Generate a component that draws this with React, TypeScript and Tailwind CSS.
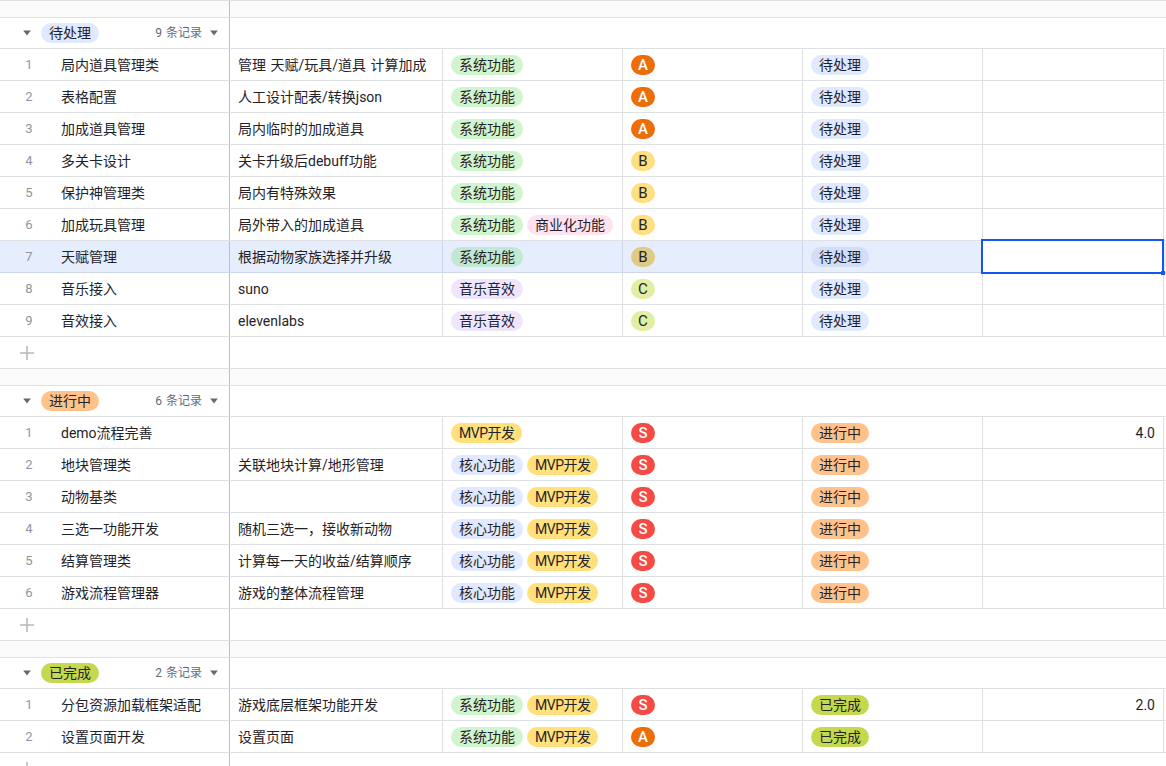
const LINE = "border-[#dee0e3]";

type Tone = { base: string; hi: string };
const tones: Record<string, Tone> = {
  系统功能: { base: "bg-[#d0f5ce]", hi: "bg-[#c0e8d3]" },
  商业化功能: { base: "bg-[#ffe2f0]", hi: "bg-[#ffe2f0]" },
  音乐音效: { base: "bg-[#efe6fd]", hi: "bg-[#efe6fd]" },
  核心功能: { base: "bg-[#e0e9ff]", hi: "bg-[#e0e9ff]" },
  MVP开发: { base: "bg-[#ffe07a]", hi: "bg-[#ffe07a]" },
  待处理: { base: "bg-[#e0e9ff]", hi: "bg-[#d2ddf7]" },
  进行中: { base: "bg-[#ffc28a]", hi: "bg-[#ffc28a]" },
  已完成: { base: "bg-[#c5d94f]", hi: "bg-[#c5d94f]" },
};

const levels: Record<string, Tone & { text: string }> = {
  S: { base: "bg-[#f54a45]", hi: "bg-[#f54a45]", text: "text-white font-medium" },
  A: { base: "bg-[#ed6d0c]", hi: "bg-[#ed6d0c]", text: "text-white font-medium" },
  B: { base: "bg-[#ffdf7f]", hi: "bg-[#e0cb84]", text: "text-[#1f2329]" },
  C: { base: "bg-[#e1efa3]", hi: "bg-[#e1efa3]", text: "text-[#1f2329]" },
};

type Row = { name: string; desc: string; tags: string[]; level: string; value?: string; selected?: boolean };
type Group = { status: string; rows: Row[] };

const sys = ["系统功能"];
const mus = ["音乐音效"];
const core = ["核心功能", "MVP开发"];
const sysMvp = ["系统功能", "MVP开发"];

const groups: Group[] = [
  {
    status: "待处理",
    rows: [
      { name: "局内道具管理类", desc: "管理 天赋/玩具/道具 计算加成", tags: sys, level: "A" },
      { name: "表格配置", desc: "人工设计配表/转换json", tags: sys, level: "A" },
      { name: "加成道具管理", desc: "局内临时的加成道具", tags: sys, level: "A" },
      { name: "多关卡设计", desc: "关卡升级后debuff功能", tags: sys, level: "B" },
      { name: "保护神管理类", desc: "局内有特殊效果", tags: sys, level: "B" },
      { name: "加成玩具管理", desc: "局外带入的加成道具", tags: ["系统功能", "商业化功能"], level: "B" },
      { name: "天赋管理", desc: "根据动物家族选择并升级", tags: sys, level: "B", selected: true },
      { name: "音乐接入", desc: "suno", tags: mus, level: "C" },
      { name: "音效接入", desc: "elevenlabs", tags: mus, level: "C" },
    ],
  },
  {
    status: "进行中",
    rows: [
      { name: "demo流程完善", desc: "", tags: ["MVP开发"], level: "S", value: "4.0" },
      { name: "地块管理类", desc: "关联地块计算/地形管理", tags: core, level: "S" },
      { name: "动物基类", desc: "", tags: core, level: "S" },
      { name: "三选一功能开发", desc: "随机三选一，接收新动物", tags: core, level: "S" },
      { name: "结算管理类", desc: "计算每一天的收益/结算顺序", tags: core, level: "S" },
      { name: "游戏流程管理器", desc: "游戏的整体流程管理", tags: core, level: "S" },
    ],
  },
  {
    status: "已完成",
    rows: [
      { name: "分包资源加载框架适配", desc: "游戏底层框架功能开发", tags: sysMvp, level: "S", value: "2.0" },
      { name: "设置页面开发", desc: "设置页面", tags: sysMvp, level: "A" },
    ],
  },
];

function Pill({ label, hi }: { label: string; hi?: boolean }) {
  const tone = tones[label];
  return (
    <span
      className={`flex h-5 shrink-0 items-center rounded-full px-2 text-[14px] leading-5 text-[#1f2329] ${
        label === "MVP开发" ? "tracking-[-0.5px]" : ""
      } ${hi ? tone.hi : tone.base}`}
    >
      {label}
    </span>
  );
}

function Caret({ className }: { className: string }) {
  return (
    <svg viewBox="0 0 8 6" className={`h-[6px] w-2 shrink-0 fill-[#646a73] ${className}`}>
      <path d="M0.2 0.6h7.6L4 5.4z" />
    </svg>
  );
}

function Spacer() {
  return (
    <div className={`flex h-[17px] border-b bg-[#fbfbfb] ${LINE}`}>
      <div className="w-[230px] shrink-0 border-r border-[#bbbfc4]" />
    </div>
  );
}

function GroupHeader({ status, count }: { status: string; count: number }) {
  return (
    <div className={`flex h-[31px] border-b ${LINE}`}>
      <div className="flex w-[230px] shrink-0 items-center border-r border-[#bbbfc4] pl-[23px]">
        <Caret className="mr-[10px]" />
        <Pill label={status} />
        <span className="ml-auto text-[12px] text-[#646a73] [word-spacing:1px]">{count} 条记录</span>
        <Caret className="ml-2 mr-[11px]" />
      </div>
    </div>
  );
}

function AddRow() {
  return (
    <div className={`flex h-8 border-b ${LINE}`}>
      <div className="flex w-[230px] shrink-0 items-center border-r border-[#bbbfc4] pl-[20px]">
        <svg viewBox="0 0 14 14" className="mt-px h-[14px] w-[14px] stroke-[#b4b8be]" fill="none" strokeWidth="1.5">
          <path d="M7 0v14M0 7h14" />
        </svg>
      </div>
    </div>
  );
}

function DataRow({ row, status, index }: { row: Row; status: string; index: number }) {
  const hi = !!row.selected;
  const line = hi ? "border-[#cdd6ea]" : LINE;
  const level = levels[row.level];
  return (
    <div className={`relative flex h-8 border-b ${line} ${hi ? "bg-[#e6edfc]" : ""}`}>
      <div className="flex w-[230px] shrink-0 items-center border-r border-[#bbbfc4]">
        <span className="w-[58px] text-center text-[13px] text-[#8f959e]">{index + 1}</span>
        <span className="ml-[3px] pt-px text-[14px] text-[#1f2329]">{row.name}</span>
      </div>
      <div className={`flex w-[213px] shrink-0 items-center border-r pl-2 pt-px text-[14px] text-[#1f2329] [word-spacing:1px] ${line}`}>
        {row.desc}
      </div>
      <div className={`flex w-[180px] shrink-0 items-center gap-1 border-r pl-2 ${line}`}>
        {row.tags.map((t) => (
          <Pill key={t} label={t} hi={hi} />
        ))}
      </div>
      <div className={`flex w-[180px] shrink-0 items-center border-r pl-2 ${line}`}>
        <span className={`flex h-5 w-6 items-center justify-center rounded-full pt-px text-[15px] ${level.text} ${hi ? level.hi : level.base}`}>
          {row.level}
        </span>
      </div>
      <div className={`flex w-[180px] shrink-0 items-center border-r pl-2 ${line}`}>
        <Pill label={status} hi={hi} />
      </div>
      <div className={`flex w-[181px] shrink-0 items-center justify-end border-r pr-2 pt-px text-[14px] text-[#1f2329] ${LINE}`}>
        {row.value}
      </div>
      {hi && (
        <div className="absolute left-[981px] top-[-2px] z-10 h-[35px] w-[183px] border-2 border-[#1456f0] bg-white">
          <span className="absolute -bottom-[3px] -right-[3px] h-1 w-1 bg-[#1456f0]" />
        </div>
      )}
    </div>
  );
}

export default function App() {
  return (
    <div
      className="h-[766px] w-[1166px] overflow-hidden bg-white"
      style={{ fontFamily: 'Roboto, "Noto Sans CJK SC", sans-serif' }}
    >
      <div className={`border-t ${LINE}`} />
      {groups.map((g) => (
        <div key={g.status}>
          <Spacer />
          <GroupHeader status={g.status} count={g.rows.length} />
          {g.rows.map((r, idx) => (
            <DataRow key={r.name} row={r} status={g.status} index={idx} />
          ))}
          <AddRow />
        </div>
      ))}
    </div>
  );
}
